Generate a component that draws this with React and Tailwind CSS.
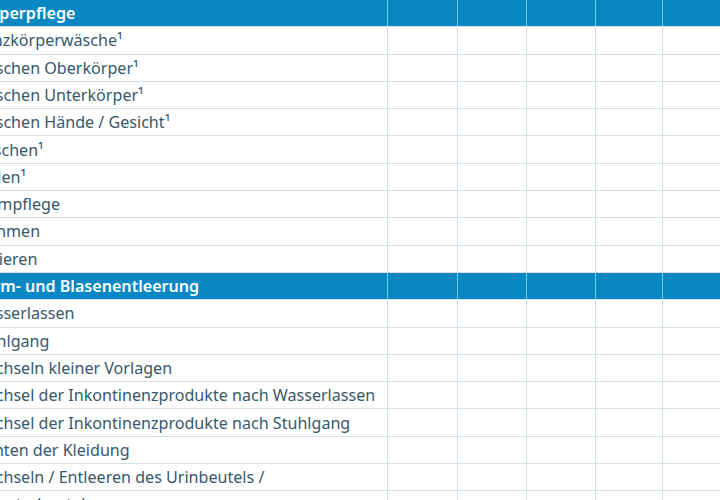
import React from "react";

const sections = [
  {
    title: "Körperpflege",
    rows: [
      "Ganzkörperwäsche¹",
      "Waschen Oberkörper¹",
      "Waschen Unterkörper¹",
      "Waschen Hände / Gesicht¹",
      "Duschen¹",
      "Baden¹",
      "Intimpflege",
      "Kämmen",
      "Rasieren",
    ],
  },
  {
    title: "Darm- und Blasenentleerung",
    rows: [
      "Wasserlassen",
      "Stuhlgang",
      "Wechseln kleiner Vorlagen",
      "Wechsel der Inkontinenzprodukte nach Wasserlassen",
      "Wechsel der Inkontinenzprodukte nach Stuhlgang",
      "Richten der Kleidung",
      "Wechseln / Entleeren des Urinbeutels /",
      "Katheterbeutels",
    ],
  },
];

function Row({ label, header }) {
  const cellBorder = header ? "border-[#7fc6e8]" : "border-[#d3e0ea]";
  const bg = header ? "bg-[#0788c3]" : "bg-white";
  return (
    <div className={`flex h-[27.3px] shrink-0 border-b ${header ? "border-[#cfe3ee]" : "border-[#d3e0ea]"} ${bg}`}>
      <div
        className={`w-[424px] shrink-0 border-r ${cellBorder} pl-2 flex items-center whitespace-nowrap overflow-hidden ${
          header ? "text-white font-semibold" : "text-[#37586b]"
        }`}
      >
        {label}
      </div>
      <div className={`w-[70px] shrink-0 border-r ${cellBorder}`} />
      <div className={`w-[69px] shrink-0 border-r ${cellBorder}`} />
      <div className={`w-[69px] shrink-0 border-r ${cellBorder}`} />
      <div className={`w-[67px] shrink-0 border-r ${cellBorder}`} />
      <div className="w-[120px] shrink-0" />
    </div>
  );
}

export default function App() {
  return (
    <div className="w-[720px] h-[500px] overflow-hidden bg-white">
      <div
        className="ml-[-36px] flex flex-col text-[16.1px] leading-none"
        style={{ fontFamily: '"Noto Sans", "Open Sans", sans-serif' }}
      >
        {sections.map((s) => (
          <React.Fragment key={s.title}>
            <Row label={s.title} header />
            {s.rows.map((r) => (
              <Row key={r} label={r} />
            ))}
          </React.Fragment>
        ))}
      </div>
    </div>
  );
}
